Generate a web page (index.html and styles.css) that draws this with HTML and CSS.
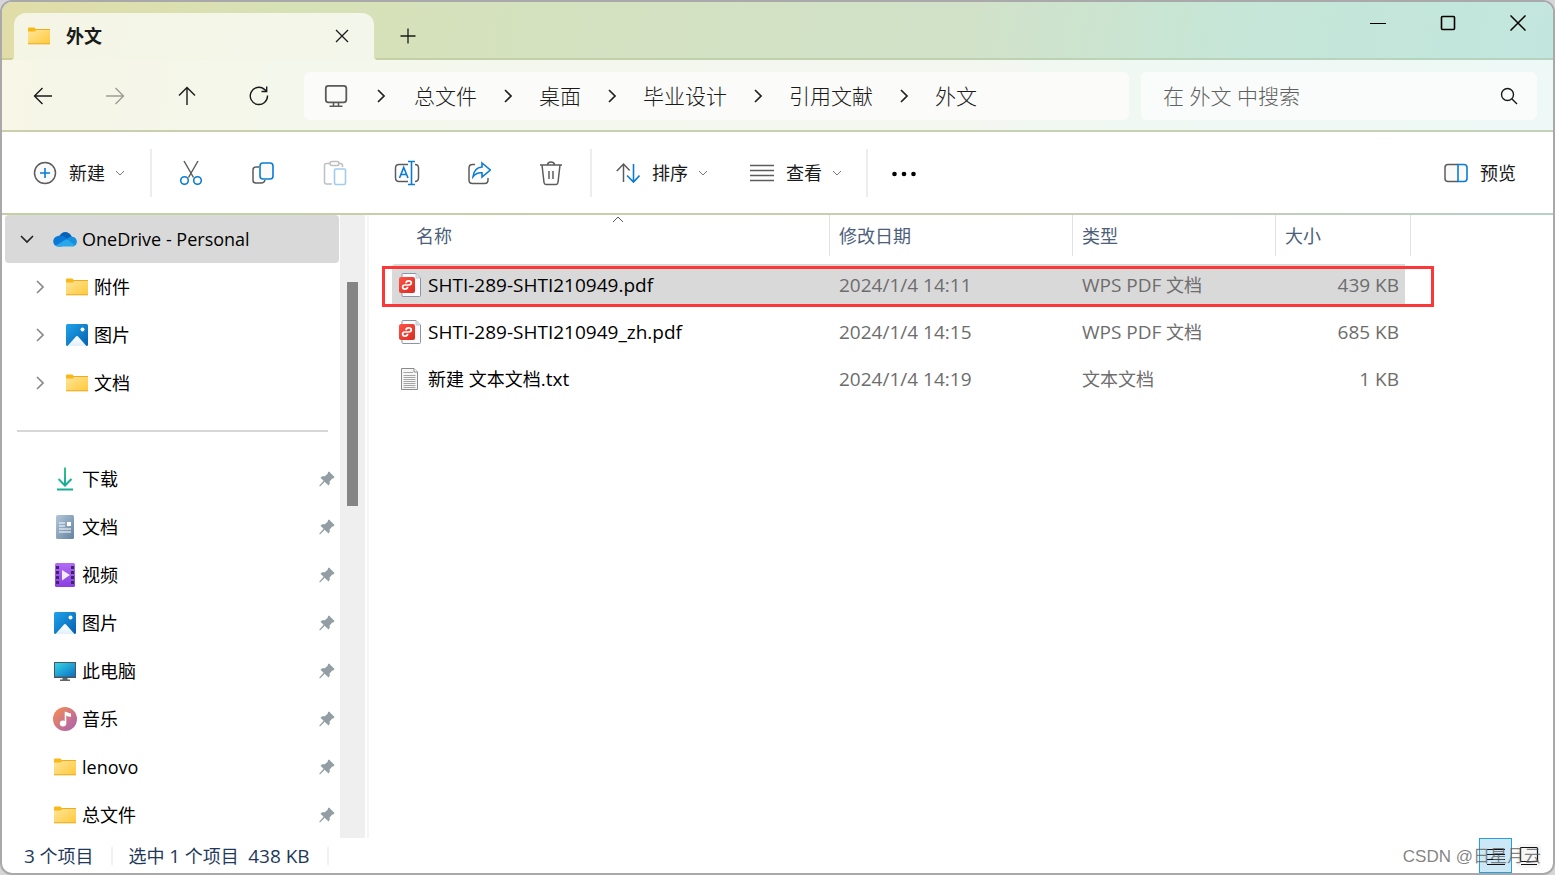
FILE: index.html
```html
<!DOCTYPE html>
<html lang="zh-CN">
<head>
<meta charset="utf-8">
<title>外文</title>
<link rel="stylesheet" href="styles.css">
</head>
<body>
<svg class="defs" aria-hidden="true">
  <defs>
    <linearGradient id="gFolder" x1="0" y1="0" x2="1" y2="1"><stop offset="0" stop-color="#ffe69b"/><stop offset="1" stop-color="#ffc93a"/></linearGradient>
    <linearGradient id="gPic" x1="0" y1="0" x2="1" y2="1"><stop offset="0" stop-color="#1fa3ea"/><stop offset="1" stop-color="#0560b0"/></linearGradient>
    <linearGradient id="gSnow" x1="0" y1="0" x2="0" y2="1"><stop offset="0" stop-color="#fff"/><stop offset="1" stop-color="#e2effb"/></linearGradient>
    <linearGradient id="gDown" gradientUnits="userSpaceOnUse" x1="0" y1="0" x2="16" y2="24"><stop offset="0" stop-color="#3fd28c"/><stop offset="1" stop-color="#0a9f9a"/></linearGradient>
    <linearGradient id="gDoc" x1="0" y1="0" x2="1" y2="1"><stop offset="0" stop-color="#b2c7da"/><stop offset="1" stop-color="#64829f"/></linearGradient>
    <linearGradient id="gVid" x1="0" y1="0" x2="0" y2="1"><stop offset="0" stop-color="#b36bf5"/><stop offset="1" stop-color="#8a3fe0"/></linearGradient>
    <linearGradient id="gPc" x1="0" y1="0" x2="1" y2="1"><stop offset="0" stop-color="#35d6e6"/><stop offset="1" stop-color="#0b6fc4"/></linearGradient>
    <linearGradient id="gMus" x1="0" y1="0" x2="1" y2="1"><stop offset="0" stop-color="#f98f4f"/><stop offset="1" stop-color="#a65fb8"/></linearGradient>
    <linearGradient id="gPdf" x1="0" y1="0" x2="1" y2="1"><stop offset="0" stop-color="#ff5445"/><stop offset="1" stop-color="#d92a20"/></linearGradient>
  </defs>
  <symbol id="folder" viewBox="0 0 24 24">
    <path d="M1 4.500q0-1 1-1h5.500l1.500 2v3H1z" fill="#f9b817"/>
    <path d="M1 7.500h7l1.500-2H23v14.500H1z" fill="url(#gFolder)"/>
    <path d="M8.500 5.500H23" stroke="#f0ab1c" fill="none"/><path d="M1 19.800h22" stroke="#eda91f"/>
  </symbol>
  <symbol id="picture" viewBox="0 0 24 24">
    <rect x="1" y="1" width="22" height="22" rx="1.500" fill="url(#gPic)"/>
    <path d="M2.500 23L11 13.500q1-1 2 0L21.500 23z" fill="url(#gSnow)"/><circle cx="17.500" cy="6.500" r="2" fill="#fff"/>
  </symbol>
  <symbol id="cloud" viewBox="0 0 24 24">
    <path d="M6.500 9C8 4.500 15.500 2.500 19 10l-7 5z" fill="#0562b8"/>
    <path d="M5 19.500C-1.500 19 -1.500 9.500 6 8.700c3-.5 5 .8 8 2.800L9 19.500z" fill="#0a78d4"/>
    <path d="M14 12c2-2 4-2.500 5.500-2.200C25 10.500 25.500 18 20 19.500z" fill="#1490df"/>
    <path d="M2.500 18.700L13.500 12l8.700 6.300q-1.200 1.200-3.200 1.200H5q-1.500 0-2.500-.8z" fill="#28a8ea"/>
  </symbol>
  <symbol id="download" viewBox="0 0 24 24"><g fill="none" stroke="url(#gDown)" stroke-width="2"><path d="M12 .5V18M5.500 12l6.500 6.500L18.500 12"/></g><path d="M4 22.500h16" stroke="#17ae92" stroke-width="2"/></symbol>
  <symbol id="document" viewBox="0 0 24 24"><rect x="3" y="0" width="18" height="24" rx="1.500" fill="url(#gDoc)"/><path d="M6 8h6M6 11h6M6 14h12M6 17h12" stroke="#fff" stroke-width="1.200"/><path d="M14 7h4v4h-4z" fill="#fff"/></symbol>
  <symbol id="video" viewBox="0 0 24 24"><rect x="2" y="0" width="20" height="24" rx="1.500" fill="url(#gVid)"/><path d="M4.500 3v19M19.500 3v19" stroke="#3f2470" stroke-width="3" stroke-dasharray="3 2"/><path d="M9 7l8 5-8 5.500z" fill="#f1ecf6"/></symbol>
  <symbol id="pc" viewBox="0 0 24 24"><path d="M1 3h22v16H1z" fill="#4a555f"/><path d="M2 4h20v13.500H2z" fill="url(#gPc)"/><path d="M9.500 19h5v1.500h-5zM7 20.500h10V22H7z" fill="#5c666e"/></symbol>
  <symbol id="music" viewBox="0 0 24 24"><circle cx="12" cy="12" r="12" fill="url(#gMus)"/><ellipse cx="10" cy="16.500" rx="3.200" ry="3" fill="#fff"/><path d="M11.700 16.500V4.500c2.500.2 4 2 6.300 2v3.300c-2.300 0-3.300-.6-4.700-1.300v8z" fill="#fff"/></symbol>
  <symbol id="pin" viewBox="0 0 16 16"><path d="M10 .5L15.500 6l-.8 1.200-1.400.2-2.700 3.200.2 2.200-1.300 1.700-3.800-3.700L1 15.500l-.8-.8 4.400-4.900L1.500 6.700l1.700-1.500 2.500.1 3-2.600.2-1.400z" fill="#929da4"/></symbol>
  <symbol id="down" viewBox="0 0 10 10"><path d="M1 3l4 4 4-4" fill="none" stroke="#777"/></symbol>
  <symbol id="right" viewBox="0 0 8 14"><path d="M1 1l6 6-6 6" fill="none" stroke="currentColor" stroke-width="1.700"/></symbol>
  <symbol id="pdf" viewBox="0 0 24 24"><path d="M4 1.500q0-1 1-1h13L22.500 5v17.500q0 1-1 1H5q-1 0-1-1z" fill="#fbfbfd" stroke="#8b95a6"/><path d="M18 .5V5h4.500" fill="#dfe3ea" stroke="#b6bdc8" stroke-width=".8"/><rect x="1" y="4" width="16" height="16" rx="2" fill="url(#gPdf)"/><path d="M8 10.200q0-2.400 2.600-2.400t2.700 2q0 2.200-2.700 2.200H7q-2.400 0-2.400 2t2.400 2.100q2.600 0 2.600-2.300" fill="none" stroke="#fff" stroke-width="1.700"/></symbol>
  <symbol id="txt" viewBox="0 0 24 24"><path d="M3.500 1.500H16L19.500 5v17.500h-16z" fill="#f6f6f6" stroke="#8b8b8b"/><path d="M16 1.500V5h3.500" fill="#fff" stroke="#8b8b8b"/><path d="M5.500 5.500H15M5.500 8.500h12M5.500 10.500h12M5.500 12.500h12M5.500 14.500h12M5.500 16.500h12M5.500 18.500h12M5.500 20.500h12" stroke="#a5a5a5"/></symbol>
</svg>

<div class="window">
  <header class="top">
    <div class="titlebar">
      <div class="tab">
        <svg class="ico"><use href="#folder"/></svg>
        <span class="tab-title">外文</span>
        <button class="plain" aria-label="关闭标签页"><svg width="14" height="14"><path d="M1 1l12 12M13 1L1 13" class="thin"/></svg></button>
      </div>
      <button class="plain new-tab" aria-label="新标签页"><svg width="16" height="16"><path d="M8 .5v15M.5 8h15" class="thin"/></svg></button>
      <div class="caption">
        <button class="plain" aria-label="最小化"><svg width="16" height="16"><path d="M0 8.500h16" stroke="#000"/></svg></button>
        <button class="plain" aria-label="最大化"><svg width="16" height="16"><rect x="1.500" y="1.500" width="13" height="13" rx="1" fill="none" stroke="#000" stroke-width="1.600"/></svg></button>
        <button class="plain" aria-label="关闭"><svg width="16" height="16"><path d="M.5 .5l15 15M15.500 .5l-15 15" stroke="#000" stroke-width="1.500"/></svg></button>
      </div>
    </div>
    <nav class="navbar">
      <button class="plain step" aria-label="后退"><svg width="20" height="20"><path d="M19 10H1.500M9.500 2l-8 8 8 8" class="line"/></svg></button>
      <button class="plain step dim" aria-label="前进"><svg width="20" height="20"><path d="M1 10h17.500M10.500 2l8 8-8 8" class="line"/></svg></button>
      <button class="plain step" aria-label="上移"><svg width="20" height="20"><path d="M10 19V1.500M2 9.500l8-8 8 8" class="line"/></svg></button>
      <button class="plain step" aria-label="刷新"><svg width="20" height="20"><path d="M18.500 9.500A8.600 8.600 0 1 1 15.500 3.400L17.500 5M17.700 .5V5.500H12.500" class="line"/></svg></button>
      <div class="address">
        <svg class="ico" viewBox="0 0 24 24"><rect x="1.800" y="1.800" width="20.500" height="16.500" rx="2.500" fill="none" stroke="#5a5a5a" stroke-width="1.800"/><path d="M9.500 18.500V22M14.500 18.500V22M5.500 22.300h13" fill="none" stroke="#5a5a5a" stroke-width="1.600"/></svg>
        <svg class="sep"><use href="#right"/></svg><a href="#">总文件</a>
        <svg class="sep"><use href="#right"/></svg><a href="#">桌面</a>
        <svg class="sep"><use href="#right"/></svg><a href="#">毕业设计</a>
        <svg class="sep"><use href="#right"/></svg><a href="#">引用文献</a>
        <svg class="sep"><use href="#right"/></svg><a href="#">外文</a>
      </div>
      <div class="search">
        <input type="text" aria-label="搜索" placeholder="在 外文 中搜索">
        <svg width="18" height="18"><circle cx="7.500" cy="7.500" r="6" class="line"/><path d="M12 12l5 5" class="line"/></svg>
      </div>
    </nav>
  </header>

  <div class="commands">
    <button class="plain cmd"><svg class="ico" viewBox="0 0 24 24"><circle cx="12" cy="12" r="10.500" fill="#fafafa" class="gray"/><path d="M12 7v10M7 12h10" class="blue"/></svg><span>新建</span><svg class="tiny"><use href="#down"/></svg></button>
    <i class="bar"></i>
    <div class="tools">
      <button class="plain" aria-label="剪切"><svg class="ico wide" viewBox="0 0 24 26"><path d="M5 1l9.500 16.500M19 1L9.500 17.500" class="gray"/><circle cx="5.500" cy="20.500" r="3.800" class="blue"/><circle cx="18.500" cy="20.500" r="3.800" class="blue"/></svg></button>
      <button class="plain" aria-label="复制"><svg class="ico" viewBox="0 0 24 24"><path d="M8 6H5Q2 6 2 9v10.500Q2 22 5 22h5q3.500 0 4-3" class="gray"/><rect x="9" y="2" width="13" height="16" rx="3" fill="#fafafa" class="blue"/></svg></button>
      <button class="plain faded" aria-label="粘贴"><svg class="ico wide" viewBox="0 0 24 26"><path d="M7 3.500H3.500Q1.500 3.500 1.500 5.500V22q0 2 2 2H9M16 3.500h1.500q2 0 2 2V7" class="gray"/><rect x="7" y="1.500" width="9" height="4" rx="2" fill="none" class="gray"/><rect x="11.500" y="9" width="11" height="15.500" rx="1.500" fill="#fff" class="blue"/></svg></button>
      <button class="plain" aria-label="重命名"><svg class="ico wide" viewBox="0 0 26 26"><path d="M14 4.500H5Q1.500 4.500 1.500 8v9.500Q1.500 21.500 5 21.500h9M21 4.500q3.500 0 3.500 3.500v9.500q0 4-3.500 4" class="gray"/><path d="M5.500 18L9.700 7.500 14 18M7 14.500h5.500M14 1.500h7M17.500 1.500v23M14 24.500h7" class="blue"/></svg></button>
      <button class="plain" aria-label="共享"><svg class="ico" viewBox="0 0 24 24"><path d="M8 3.500H5.500Q2 3.500 2 7v12q0 3.500 3.500 3.500h12Q21 22.500 21 19v-2" class="gray"/><path d="M15 2l8.300 7-8.300 7v-4.200q-5.500-.6-9 4 .8-9 9-9.800z" class="blue"/></svg></button>
      <button class="plain" aria-label="删除"><svg class="ico wide" viewBox="0 0 26 26"><path d="M2 5h22M4 5l2 17.500q.3 2 2 2h10q1.700 0 2-2L22 5M9.500 4.500Q10 2 13 2t3.500 2.500M11 11v8M15 11v8" class="gray"/></svg></button>
    </div>
    <i class="bar"></i>
    <div class="menus">
      <button class="plain cmd"><svg class="ico" viewBox="0 0 24 24"><path d="M7.500 21V3M.8 10l6.700-7 6.200 6.500" class="gray"/><path d="M17.500 3v18M11 14.500l6.500 6.500 6-6.500" class="blue"/></svg><span>排序</span><svg class="tiny"><use href="#down"/></svg></button>
      <button class="plain cmd"><svg class="ico" viewBox="0 0 24 24"><path d="M0 4.500h24M0 9.500h24M0 14.500h24M0 19.500h24" class="gray"/></svg><span>查看</span><svg class="tiny"><use href="#down"/></svg></button>
    </div>
    <i class="bar"></i>
    <button class="plain more" aria-label="更多"><svg class="ico" viewBox="0 0 24 24"><circle cx="2.500" cy="13" r="2.300"/><circle cx="12" cy="13" r="2.300"/><circle cx="21.500" cy="13" r="2.300"/></svg></button>
    <button class="plain cmd preview"><svg class="ico" viewBox="0 0 24 24"><path d="M14 3.500H4Q1 3.500 1 6.500v11Q1 20.500 4 20.500h10" fill="#fafafa" class="gray"/><path d="M14 3.500h6q3 0 3 3v11q0 3-3 3h-6z" fill="#fafafa" class="blue"/></svg><span>预览</span></button>
  </div>

  <main class="content">
    <aside class="side">
      <ul class="tree">
        <li class="root"><svg class="open" width="14" height="14"><path d="M1 4l6 6 6-6" fill="none" stroke="#222" stroke-width="1.600"/></svg><svg class="ico"><use href="#cloud"/></svg><span>OneDrive - Personal</span></li>
        <li class="child"><svg class="twist"><use href="#right"/></svg><svg class="ico"><use href="#folder"/></svg><span>附件</span></li>
        <li class="child"><svg class="twist"><use href="#right"/></svg><svg class="ico"><use href="#picture"/></svg><span>图片</span></li>
        <li class="child"><svg class="twist"><use href="#right"/></svg><svg class="ico"><use href="#folder"/></svg><span>文档</span></li>
      </ul>
      <div class="rule"></div>
      <ul class="tree">
        <li class="fav"><svg class="ico"><use href="#download"/></svg><span>下载</span><svg class="pin"><use href="#pin"/></svg></li>
        <li class="fav"><svg class="ico"><use href="#document"/></svg><span>文档</span><svg class="pin"><use href="#pin"/></svg></li>
        <li class="fav"><svg class="ico"><use href="#video"/></svg><span>视频</span><svg class="pin"><use href="#pin"/></svg></li>
        <li class="fav"><svg class="ico"><use href="#picture"/></svg><span>图片</span><svg class="pin"><use href="#pin"/></svg></li>
        <li class="fav"><svg class="ico"><use href="#pc"/></svg><span>此电脑</span><svg class="pin"><use href="#pin"/></svg></li>
        <li class="fav"><svg class="ico"><use href="#music"/></svg><span>音乐</span><svg class="pin"><use href="#pin"/></svg></li>
        <li class="fav"><svg class="ico"><use href="#folder"/></svg><span>lenovo</span><svg class="pin"><use href="#pin"/></svg></li>
        <li class="fav"><svg class="ico"><use href="#folder"/></svg><span>总文件</span><svg class="pin"><use href="#pin"/></svg></li>
      </ul>
    </aside>
    <div class="scroll"><div class="thumb"></div></div>
    <section class="files">
      <table>
        <colgroup><col class="c-name"><col class="c-date"><col class="c-type"><col class="c-size"></colgroup>
        <thead><tr>
          <th class="first"><button class="plain head">名称</button><svg class="sort" width="12" height="7"><path d="M1 6l5-5 5 5" fill="none" stroke="#555"/></svg></th>
          <th><button class="plain head">修改日期</button></th><th><button class="plain head">类型</button></th><th><button class="plain head">大小</button></th>
        </tr></thead>
        <tbody>
          <tr class="selected"><td><div class="name"><svg class="ico"><use href="#pdf"/></svg><span class="en">SHTI-289-SHTI210949.pdf</span></div></td><td class="en">2024/1/4 14:11</td><td><span class="en">WPS PDF</span> 文档</td><td class="en">439 KB</td></tr>
          <tr><td><div class="name"><svg class="ico"><use href="#pdf"/></svg><span class="en">SHTI-289-SHTI210949_zh.pdf</span></div></td><td class="en">2024/1/4 14:15</td><td><span class="en">WPS PDF</span> 文档</td><td class="en">685 KB</td></tr>
          <tr><td><div class="name"><svg class="ico"><use href="#txt"/></svg><span>新建 文本文档<span class="en">.txt</span></span></div></td><td class="en">2024/1/4 14:19</td><td>文本文档</td><td class="en">1 KB</td></tr>
        </tbody>
      </table>
      <div class="mark"></div>
    </section>
  </main>

  <footer class="status">
    <span class="count"><span class="en">3</span> 个项目</span>
    <span class="chosen">选中 <span class="en">1</span> 个项目&nbsp; <span class="en">438 KB</span></span>
    <div class="views">
      <button class="plain on" aria-label="详细信息"><svg width="20" height="20"><path d="M1 3.500h18M1 8.500h18M1 13.500h18M1 18.500h18" stroke="#111"/></svg></button>
      <button class="plain" aria-label="大图标"><svg width="20" height="20"><rect x="1.500" y="1.500" width="17" height="14" rx="1" fill="none" stroke="#111" stroke-width="1.200"/><path d="M2 18.500h16" stroke="#111"/></svg></button>
    </div>
    <span class="watermark">CSDN @日星月云</span>
  </footer>
</div>
</body>
</html>
```
FILE: styles.css
```css
* { box-sizing: border-box; }
body { margin: 0; background: #d6d6d8; font: 18px/24px "Open Sans", "Noto Sans CJK SC", sans-serif; color: #000; }
.defs { position: absolute; width: 0; height: 0; }
svg { display: block; flex: none; }
ul { list-style: none; margin: 0; padding: 0; }
.plain { border: 0; padding: 0; margin: 0; background: none; font: inherit; color: inherit; display: flex; align-items: center; justify-content: center; }
.en { font-size: 19px; }
.ico { width: 24px; height: 24px; }
.ico.wide { width: 26px; height: 26px; }
.thin { stroke: #1a1a1a; stroke-width: 1.3; fill: none; }
.line { stroke: #1a1a1a; stroke-width: 1.4; fill: none; }
.gray { stroke: #5c5c5c; stroke-width: 1.5; }
.blue { stroke: #0a7cd8; stroke-width: 1.6; }
path.gray:not([fill]), path.blue:not([fill]), circle.blue { fill: none; }

.window { height: 100vh; display: flex; flex-direction: column; background: #fff; border: 2px solid #a9a9ab; border-radius: 12px; overflow: hidden; }
.top { background: linear-gradient(100deg, #e1dda8 0%, #d7e1b6 18%, #d4e2c2 40%, #d1e2c9 62%, #c5e6d8 80%, #c2e6de 100%); }
.titlebar { display: flex; height: 58px; padding-left: 12px; box-shadow: inset 0 -2px rgba(130, 150, 90, .22); }
.tab { position: relative; width: 360px; margin-top: 11px; padding: 0 25px 2px 13px; display: flex; align-items: center; border-radius: 12px 12px 0 0; background: linear-gradient(100deg, #f4f5e5, #f3f6ea); }
.tab::before, .tab::after { content: ""; position: absolute; bottom: 0; width: 5px; height: 5px; }
.tab::before { right: 100%; background: radial-gradient(circle at 0 0, transparent 5px, #f4f5e6 6px); }
.tab::after { left: 100%; background: radial-gradient(circle at 100% 0, transparent 5px, #f3f6ea 6px); }
.tab-title { flex: 1; margin-left: 15px; font-weight: 700; color: #1a1a1a; }
.new-tab { width: 68px; margin-top: 9px; }
.caption { margin-left: auto; display: flex; height: 41px; }
.caption button { width: 70px; }
.navbar { display: flex; align-items: center; height: 72px; padding: 2px 16px 0 5px; background: rgba(255, 255, 255, .72); border-bottom: 2px solid rgba(140, 155, 90, .42); }
.step { width: 72px; height: 48px; }
.dim { opacity: .4; }
.address { flex: 1; height: 48px; margin: 0 12px 0 9px; padding-left: 20px; display: flex; align-items: center; background: #fbfbf9; border-radius: 6px; font-size: 21px; font-weight: 300; }
.address a { color: #1a1a1a; text-decoration: none; white-space: nowrap; }
.sep { width: 8px; height: 14px; margin: 0 27px; color: #222; }
.address .ico + .sep { margin: 0 29px; }
.search { width: 396px; height: 48px; padding: 0 19px 0 22px; display: flex; align-items: center; background: #fafcfb; border-radius: 6px; }
.search input { flex: 1; min-width: 0; border: 0; padding: 0; background: none; font: inherit; font-size: 21px; font-weight: 300; outline: 0; }
.search input::placeholder { color: #5f6160; opacity: 1; }

.commands { display: flex; align-items: center; height: 83px; padding-left: 31px; border-bottom: 2px solid #c5ceb0; border-image: linear-gradient(90deg, #c6cfa4, #c9ceb2 65%, #b7d0c7) 1; }
.cmd { color: #1a1a1a; white-space: nowrap; }
.cmd span { margin-left: 12px; }
.tiny { width: 10px; height: 10px; margin-left: 10px; }
.bar { width: 2px; height: 48px; background: #ededed; }
.commands > .cmd:first-child { margin-right: 25px; }
.tools { display: flex; padding: 0 3px; }
.tools button { width: 72px; height: 48px; }
.faded { opacity: .38; }
.menus { display: flex; gap: 42px; padding: 0 24px; }
.more { margin-left: 24px; }
.preview { margin-left: auto; margin-right: 37px; }

.content { flex: 1; min-height: 0; display: flex; }
.side { width: 338px; padding: 0 1px 0 3px; overflow: hidden; flex: none; }
.tree li { display: flex; align-items: center; height: 48px; }
.tree .ico { margin-right: 5px; }
.root { background: #d9d9d9; border-radius: 4px; padding-left: 15px; }
.open { margin-right: 19px; }
.child { padding-left: 31px; }
.twist { width: 8px; height: 14px; margin-right: 21px; color: #8a8a8a; }
.rule { height: 2px; margin: 23px 11px 23px 12px; background: #d6d6d6; }
.fav { padding: 0 4px 0 48px; }
.pin { width: 16px; height: 16px; margin-left: auto; }
.scroll { width: 25px; flex: none; background: #efefef; padding: 67px 7px 0; }
.thumb { height: 224px; background: #858585; }
.files { position: relative; flex: 1; margin-left: 2px; padding-left: 23px; border-left: 2px solid #f5f5f5; }
table { table-layout: fixed; width: 1019px; border-collapse: separate; border-spacing: 0; }
.c-name { width: 438px; } .c-date { width: 243px; } .c-type { width: 203px; } .c-size { width: 135px; }
th { height: 47px; padding: 0; vertical-align: top; font-weight: 400; color: #4c607a; position: relative; }
.plain.head { width: 100%; height: 41px; padding-left: 9px; justify-content: flex-start; border-right: 1px solid #e2e2e2; }
.first .plain.head { padding-left: 24px; }
.sort { position: absolute; top: 1px; left: 220px; }
td { height: 47px; padding: 0 0 2px 9px; border: solid transparent; border-width: 2px 0; background-clip: padding-box; color: #6d6d6d; white-space: nowrap; }
td:first-child { padding-left: 6px; color: #000; border-radius: 4px 0 0 4px; }
td:last-child { padding-right: 6px; border-right-width: 6px; text-align: right; }
.selected td { background-color: #d9d9d9; }
.name { display: flex; align-items: center; gap: 6px; }
.mark { position: absolute; top: 51px; left: 13px; width: 1052px; height: 41px; border: 3px solid #fc3737; }

.status { position: relative; display: flex; align-items: center; height: 35px; padding-left: 22px; color: #1e395b; }
.status > .count, .status > .chosen { padding-right: 17px; line-height: 18px; border-right: 2px solid #f1f1f1; white-space: nowrap; }
.chosen { margin-left: 16px; }
.views { margin-left: auto; margin-right: 12px; display: flex; align-items: center; gap: 5px; }
.views button { width: 24px; height: 24px; background: #f6f6f6; border-radius: 4px; }
.views .on { width: 33px; height: 35px; background: #cce8f6; border: 1px solid #26a0da; border-radius: 0; }
.watermark { position: absolute; right: 12px; top: 7px; font: 17px/24px "Liberation Sans", "Noto Sans CJK SC", sans-serif; color: rgba(90, 90, 90, .75); }
```
